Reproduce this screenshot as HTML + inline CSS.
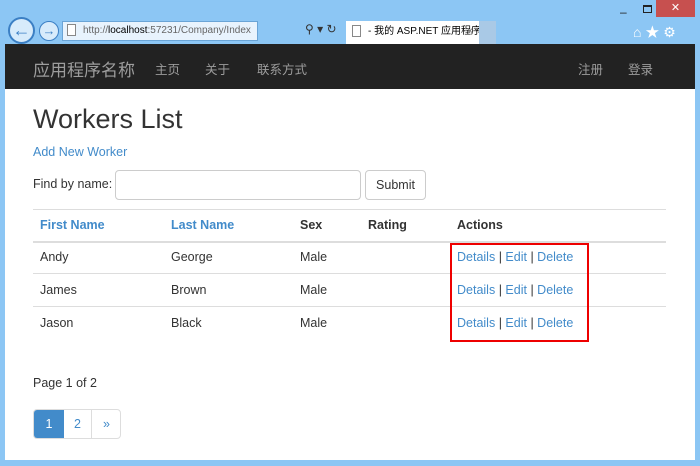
<!DOCTYPE html>
<html><head><meta charset="utf-8"><style>
*{margin:0;padding:0;box-sizing:border-box}
body{width:700px;height:466px;background:#8cc6f4;font-family:"Liberation Sans","Noto Sans CJK SC",sans-serif;font-size:12.5px;color:#333;position:relative;overflow:hidden}
.a{position:absolute}
.link{color:#428bca}
.nav{left:5px;top:44px;width:690px;height:45px;background:#222;color:#9d9d9d}
.page{left:5px;top:89px;width:690px;height:371px;background:#fff}
.cell{position:absolute}
.hl{position:absolute;left:33px;width:633px;height:1px;background:#ddd}
</style></head><body>
<div class="a" style="left:8px;top:17px;width:27px;height:27px;border:2px solid #3b7fc4;border-radius:50%;background:#d7ebfb;color:#3b7fc4;font-size:18px;text-align:center;line-height:22px">←</div>
<div class="a" style="left:39px;top:21px;width:20px;height:20px;border:1px solid #3b7fc4;border-radius:50%;background:#d7ebfb;color:#3b7fc4;font-size:13px;text-align:center;line-height:18px">→</div>
<div class="a" style="left:62px;top:21px;width:196px;height:20px;background:#e8f3fd;border:1px solid #6aa4d6;font-size:10px;line-height:18px;padding-left:20px;color:#666;white-space:nowrap">http://<span style="color:#000">localhost</span>:57231/Company/Index</div>
<div class="a" style="left:67px;top:24px;width:9px;height:12px;background:#fff;border:1px solid #888"></div>
<div class="a" style="left:305px;top:22px;font-size:12px;color:#333">⚲ ▾ ↻</div>
<div class="a" style="left:346px;top:21px;width:133px;height:23px;background:#fff;font-size:10px;line-height:22px;padding-left:22px;color:#000;white-space:nowrap">- 我的 ASP.NET 应用程序<span style="position:absolute;right:6px;color:#666">×</span></div>
<div class="a" style="left:352px;top:25px;width:9px;height:12px;background:#fff;border:1px solid #888"></div>
<div class="a" style="left:479px;top:21px;width:17px;height:23px;background:#a9c9e6"></div>
<div class="a" style="left:633px;top:22px;font-size:14px;color:#fff">⌂ ★ ⚙</div>
<div class="a" style="left:620px;top:5px;font-size:12px;color:#222">–</div>
<div class="a" style="left:643px;top:5px;width:9px;height:8px;border:1px solid #222;border-top-width:2px"></div>
<div class="a" style="left:656px;top:0;width:39px;height:17px;background:#c7504f;color:#fff;text-align:center;line-height:17px;font-size:11px">✕</div>
<div class="a nav">
<span class="a" style="left:28px;top:12px;font-size:17px">应用程序名称</span>
<span class="a" style="left:150px;top:15px">主页</span>
<span class="a" style="left:200px;top:15px">关于</span>
<span class="a" style="left:252px;top:15px">联系方式</span>
<span class="a" style="left:573px;top:15px">注册</span>
<span class="a" style="left:623px;top:15px">登录</span>
</div>
<div class="a page"></div>
<div class="a" style="left:33px;top:104px;font-size:27px;color:#333">Workers List</div>
<div class="a link" style="left:33px;top:145px">Add New Worker</div>
<div class="a" style="left:33px;top:177px">Find by name:</div>
<div class="a" style="left:115px;top:170px;width:246px;height:30px;border:1px solid #ccc;border-radius:4px"></div>
<div class="a" style="left:365px;top:170px;width:61px;height:30px;border:1px solid #ccc;border-radius:4px;text-align:center;line-height:28px">Submit</div>
<div class="hl" style="top:209px"></div>
<div class="hl" style="top:241px;height:2px"></div>
<div class="hl" style="top:273px"></div>
<div class="hl" style="top:306px"></div>
<div class="a" style="top:218px;left:0;font-weight:bold;width:700px">
<span class="cell link" style="left:40px">First Name</span><span class="cell link" style="left:171px">Last Name</span><span class="cell" style="left:300px">Sex</span><span class="cell" style="left:368px">Rating</span><span class="cell" style="left:457px">Actions</span></div>
<div class="a" style="top:250px;left:0;width:700px"><span class="cell" style="left:40px">Andy</span><span class="cell" style="left:171px">George</span><span class="cell" style="left:300px">Male</span><span class="cell" style="left:457px;white-space:nowrap"><span class="link">Details</span> | <span class="link">Edit</span> | <span class="link">Delete</span></span></div>
<div class="a" style="top:283px;left:0;width:700px"><span class="cell" style="left:40px">James</span><span class="cell" style="left:171px">Brown</span><span class="cell" style="left:300px">Male</span><span class="cell" style="left:457px;white-space:nowrap"><span class="link">Details</span> | <span class="link">Edit</span> | <span class="link">Delete</span></span></div>
<div class="a" style="top:316px;left:0;width:700px"><span class="cell" style="left:40px">Jason</span><span class="cell" style="left:171px">Black</span><span class="cell" style="left:300px">Male</span><span class="cell" style="left:457px;white-space:nowrap"><span class="link">Details</span> | <span class="link">Edit</span> | <span class="link">Delete</span></span></div>
<div class="a" style="left:450px;top:243px;width:139px;height:99px;border:2px solid #e00"></div>
<div class="a" style="left:33px;top:376px">Page 1 of 2</div>
<div class="a" style="left:33px;top:409px;width:88px;height:30px;border:1px solid #ddd;border-radius:4px;overflow:hidden">
<div class="a" style="left:0;top:0;width:30px;height:30px;background:#428bca;color:#fff;text-align:center;line-height:28px">1</div>
<div class="a link" style="left:30px;top:0;width:28px;height:30px;border-right:1px solid #ddd;text-align:center;line-height:28px">2</div>
<div class="a link" style="left:58px;top:0;width:29px;height:30px;text-align:center;line-height:28px">»</div>
</div>
</body></html>
